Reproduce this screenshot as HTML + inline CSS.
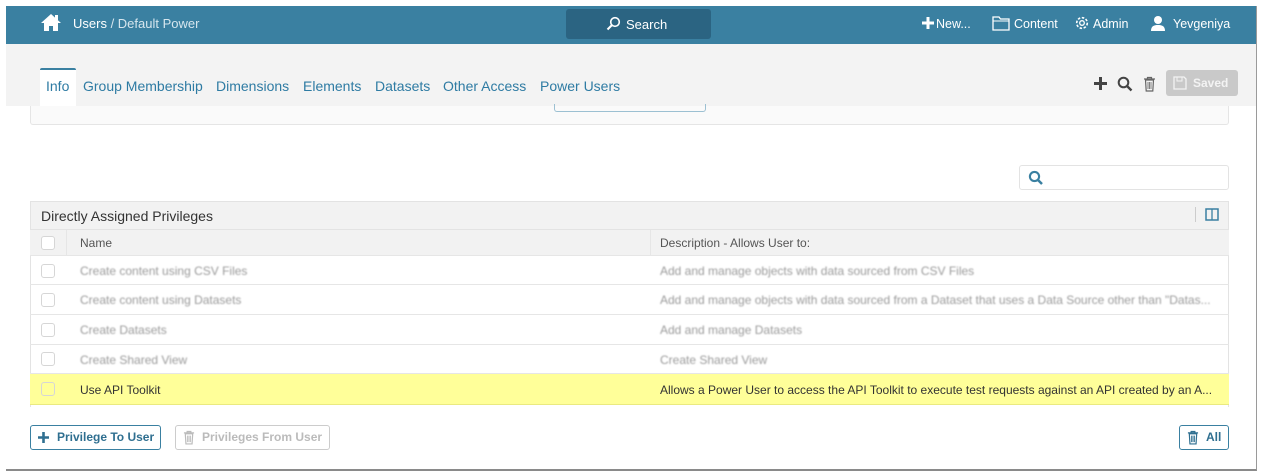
<!DOCTYPE html>
<html><head><style>
*{box-sizing:border-box;margin:0;padding:0}
body{width:1264px;height:474px;background:#fff;font-family:"Liberation Sans",Arial,sans-serif;position:relative;overflow:hidden}
.a{position:absolute}
.frame{left:6px;top:6px;width:1251px;height:465px;border-right:1px solid #9a9a9a;border-bottom:2px solid #8a8a8a;background:#fff;overflow:hidden}
.hdr{left:0;top:0;width:1251px;height:38px;background:#3a80a1;color:#fff;font-size:13px}
.tabbar{left:0;top:38px;width:1251px;height:62px;background:#f3f3f3}
.tab{font-size:14px;color:#2e7ba3;top:34px}
.row{left:24px;width:1199px;border-bottom:1px solid #e6e6e6;font-size:12px}
.cb{position:absolute;left:11px;width:14px;height:14px;border:1px solid #d6d6d6;border-radius:3px;background:#fff}
.bl{color:#9a9a9a;filter:blur(0.7px)}
.btn{position:absolute;height:25px;border:1px solid #3a80a1;border-radius:3px;font-size:12px;font-weight:bold;color:#2f6f90;line-height:23px;padding-left:8px}
</style></head><body>
<div class="a frame">
 <div class="a hdr">
  <svg class="a" style="left:34px;top:7px" width="22" height="19" viewBox="0 0 22 19"><path d="M11 1L1 10h3v8h5v-5h4v5h5v-8h3L11 1z" fill="#fff"/><rect x="15" y="2" width="3" height="5" fill="#fff"/></svg>
  <div class="a" style="left:67px;top:10px">Users <span style="color:#d6e6ee">/ Default Power</span></div>
  <div class="a" style="left:560px;top:3px;width:145px;height:30px;background:#2b6482;border-radius:3px"></div>
  <svg class="a" style="left:600px;top:10px" width="15" height="15" viewBox="0 0 15 15"><circle cx="9" cy="6" r="4.3" fill="none" stroke="#fff" stroke-width="1.6"/><path d="M6 9L1.5 13.5" stroke="#fff" stroke-width="2"/></svg>
  <div class="a" style="left:620px;top:11px">Search</div>
  <svg class="a" style="left:916px;top:11px" width="12" height="12" viewBox="0 0 12 12"><path d="M6 0v12M0 6h12" stroke="#fff" stroke-width="3"/></svg>
  <div class="a" style="left:930px;top:11px;font-size:12.5px">New...</div>
  <svg class="a" style="left:986px;top:10px" width="18" height="15" viewBox="0 0 18 15"><path d="M1 1h6l1.5 2H17v11H1z" fill="none" stroke="#fff" stroke-width="1.3"/><path d="M1 5h16" stroke="#fff" stroke-width="1"/></svg>
  <div class="a" style="left:1008px;top:11px;font-size:12.5px">Content</div>
  <svg class="a" style="left:1068px;top:9px" width="16" height="16" viewBox="0 0 16 16"><circle cx="8" cy="8" r="5.3" fill="none" stroke="#fff" stroke-width="1.6" stroke-dasharray="2.5 1.6"/><circle cx="8" cy="8" r="2.3" fill="none" stroke="#fff" stroke-width="1.3"/></svg>
  <div class="a" style="left:1087px;top:11px;font-size:12.5px">Admin</div>
  <svg class="a" style="left:1144px;top:9px" width="16" height="16" viewBox="0 0 16 16"><circle cx="8" cy="5" r="4" fill="#fff"/><path d="M1 16c0-5 3-6 7-6s7 1 7 6z" fill="#fff"/></svg>
  <div class="a" style="left:1167px;top:11px;font-size:12.5px">Yevgeniya</div>
 </div>
 <div class="a tabbar">
  <div class="a" style="left:34px;top:24px;width:36px;height:38px;background:#fff;border-top:2px solid #3a80a1;border-radius:2px 2px 0 0"></div>
  <div class="a tab" style="left:40px">Info</div>
  <div class="a tab" style="left:77px">Group Membership</div>
  <div class="a tab" style="left:210px">Dimensions</div>
  <div class="a tab" style="left:297px">Elements</div>
  <div class="a tab" style="left:369px">Datasets</div>
  <div class="a tab" style="left:437px">Other Access</div>
  <div class="a tab" style="left:534px">Power Users</div>
  <svg class="a" style="left:1088px;top:33px" width="13" height="13" viewBox="0 0 13 13"><path d="M6.5 0v13M0 6.5h13" stroke="#444" stroke-width="3"/></svg>
  <svg class="a" style="left:1111px;top:32px" width="16" height="16" viewBox="0 0 16 16"><circle cx="6.5" cy="6.5" r="4.8" fill="none" stroke="#444" stroke-width="2"/><path d="M10 10l4.5 4.5" stroke="#444" stroke-width="2.4"/></svg>
  <svg class="a" style="left:1137px;top:32px" width="13" height="16" viewBox="0 0 13 16"><path d="M1 3h11M4.5 3V1.5h4V3M2.5 4h8l-.7 11H3.2z" fill="none" stroke="#666" stroke-width="1.2"/><path d="M5 6v7M6.5 6v7M8 6v7" stroke="#666" stroke-width=".8"/></svg>
  <div class="a" style="left:1160px;top:26px;width:72px;height:26px;background:#c9c9c9;border-radius:3px;color:#f3f3f3;font-size:12px;font-weight:bold;line-height:26px;padding-left:27px">Saved</div>
  <svg class="a" style="left:1167px;top:32px" width="14" height="14" viewBox="0 0 14 14"><path d="M1 1h10l2 2v10H1z" fill="none" stroke="#f3f3f3" stroke-width="1.3"/><rect x="4" y="1" width="5" height="4" fill="none" stroke="#f3f3f3"/></svg>
 </div>
 <div class="a" style="left:24px;top:100px;width:1199px;height:19px;background:#fafafa;border:1px solid #e5e5e5;border-top:none;border-radius:0 0 3px 3px"></div>
 <div class="a" style="left:548px;top:98px;width:152px;height:8px;border:1px solid #9cc0d2;border-top:none;border-radius:0 0 3px 3px"></div>
 <div class="a" style="left:1013px;top:159px;width:210px;height:25px;border:1px solid #e3e3e3;border-radius:3px"></div>
 <svg class="a" style="left:1022px;top:164px" width="16" height="16" viewBox="0 0 16 16"><circle cx="6.5" cy="6.5" r="4.6" fill="none" stroke="#3a80a1" stroke-width="2.1"/><path d="M10 10l4 4" stroke="#3a80a1" stroke-width="2.5"/></svg>
 <div class="a" style="left:24px;top:195px;width:1199px;height:206px;border:1px solid #e3e3e3;border-bottom:none"></div>
 <div class="a" style="left:25px;top:196px;width:1197px;height:28px;background:#f2f2f2;border-bottom:1px solid #e3e3e3;font-size:14px;color:#333;padding:6px 0 0 10px">Directly Assigned Privileges</div>
 <div class="a" style="left:1189px;top:201px;width:1px;height:15px;background:#ccc"></div>
 <svg class="a" style="left:1199px;top:202px" width="14" height="13" viewBox="0 0 14 13"><rect x="1" y="1" width="12" height="11" fill="none" stroke="#3a80a1" stroke-width="1.5"/><path d="M7 1v11" stroke="#3a80a1" stroke-width="1.3"/></svg>
 <div class="a row" style="top:224px;height:26px;background:#f2f2f2;color:#555"><div class="cb" style="top:6px"></div><div class="a" style="left:36px;top:0;width:1px;height:25px;background:#e6e6e6"></div><div class="a" style="left:50px;top:6px">Name</div><div class="a" style="left:620px;top:0;width:1px;height:25px;background:#e6e6e6"></div><div class="a" style="left:630px;top:6px">Description - Allows User to:</div></div>
 <div class="a row" style="top:250px;height:29px"><div class="cb" style="top:8px"></div><div class="a bl" style="left:50px;top:8px">Create content using CSV Files</div><div class="a bl" style="left:630px;top:8px">Add and manage objects with data sourced from CSV Files</div></div>
 <div class="a row" style="top:279px;height:30px"><div class="cb" style="top:8px"></div><div class="a bl" style="left:50px;top:8px">Create content using Datasets</div><div class="a bl" style="left:630px;top:8px">Add and manage objects with data sourced from a Dataset that uses a Data Source other than "Datas...</div></div>
 <div class="a row" style="top:309px;height:30px"><div class="cb" style="top:8px"></div><div class="a bl" style="left:50px;top:8px">Create Datasets</div><div class="a bl" style="left:630px;top:8px">Add and manage Datasets</div></div>
 <div class="a row" style="top:339px;height:29px"><div class="cb" style="top:7px"></div><div class="a bl" style="left:50px;top:8px">Create Shared View</div><div class="a bl" style="left:630px;top:8px">Create Shared View</div></div>
 <div class="a row" style="top:368px;height:31px;background:#ffff99;border-bottom:1px solid #eaea80;color:#333"><div class="cb" style="top:8px;background:#ffff99"></div><div class="a" style="left:50px;top:9px">Use API Toolkit</div><div class="a" style="left:630px;top:9px">Allows a Power User to access the API Toolkit to execute test requests against an API created by an A...</div></div>
 <div class="btn" style="left:24px;top:419px;width:131px;padding-left:26px">Privilege To User</div>
 <svg class="a" style="left:32px;top:426px" width="11" height="11" viewBox="0 0 11 11"><path d="M5.5 0v11M0 5.5h11" stroke="#2f6f90" stroke-width="2.6"/></svg>
 <div class="btn" style="left:169px;top:419px;width:155px;border-color:#ccc;color:#bbb;padding-left:26px">Privileges From User</div>
 <svg class="a" style="left:177px;top:424px" width="12" height="15" viewBox="0 0 13 16"><path d="M1 3h11M4.5 3V1.5h4V3M2.5 4h8l-.7 11H3.2z" fill="none" stroke="#bbb" stroke-width="1.3"/><path d="M5 6v7M6.5 6v7M8 6v7" stroke="#bbb"/></svg>
 <div class="btn" style="left:1173px;top:419px;width:50px;padding-left:26px">All</div>
 <svg class="a" style="left:1181px;top:424px" width="12" height="15" viewBox="0 0 13 16"><path d="M1 3h11M4.5 3V1.5h4V3M2.5 4h8l-.7 11H3.2z" fill="none" stroke="#2f6f90" stroke-width="1.3"/><path d="M5 6v7M6.5 6v7M8 6v7" stroke="#2f6f90"/></svg>
</div>
</body></html>
